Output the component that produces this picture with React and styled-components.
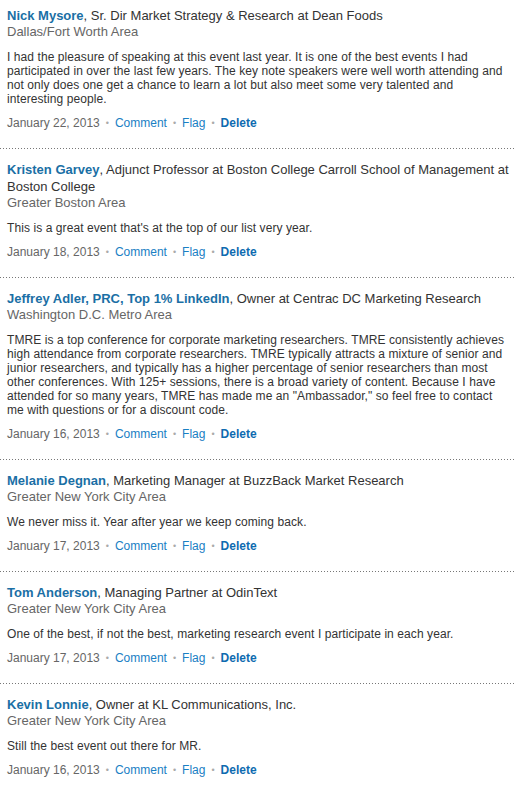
import React from 'react'
import styled, { createGlobalStyle } from 'styled-components'

const GlobalStyle = createGlobalStyle`
  body {
    margin: 0;
    background: #fff;
    font-family: Arial, "Liberation Sans", sans-serif;
  }
`

const reviews = [
  {
    name: 'Nick Mysore',
    title: 'Sr. Dir Market Strategy & Research at Dean Foods',
    location: 'Dallas/Fort Worth Area',
    text: 'I had the pleasure of speaking at this event last year. It is one of the best events I had participated in over the last few years. The key note speakers were well worth attending and not only does one get a chance to learn a lot but also meet some very talented and interesting people.',
    date: 'January 22, 2013',
  },
  {
    name: 'Kristen Garvey',
    title: 'Adjunct Professor at Boston College Carroll School of Management at Boston College',
    location: 'Greater Boston Area',
    text: "This is a great event that's at the top of our list very year.",
    date: 'January 18, 2013',
  },
  {
    name: 'Jeffrey Adler, PRC, Top 1% LinkedIn',
    title: 'Owner at Centrac DC Marketing Research',
    location: 'Washington D.C. Metro Area',
    text: 'TMRE is a top conference for corporate marketing researchers. TMRE consistently achieves high attendance from corporate researchers. TMRE typically attracts a mixture of senior and junior researchers, and typically has a higher percentage of senior researchers than most other conferences. With 125+ sessions, there is a broad variety of content. Because I have attended for so many years, TMRE has made me an "Ambassador," so feel free to contact me with questions or for a discount code.',
    date: 'January 16, 2013',
  },
  {
    name: 'Melanie Degnan',
    title: 'Marketing Manager at BuzzBack Market Research',
    location: 'Greater New York City Area',
    text: 'We never miss it. Year after year we keep coming back.',
    date: 'January 17, 2013',
  },
  {
    name: 'Tom Anderson',
    title: 'Managing Partner at OdinText',
    location: 'Greater New York City Area',
    text: 'One of the best, if not the best, marketing research event I participate in each year.',
    date: 'January 17, 2013',
  },
  {
    name: 'Kevin Lonnie',
    title: 'Owner at KL Communications, Inc.',
    location: 'Greater New York City Area',
    text: 'Still the best event out there for MR.',
    date: 'January 16, 2013',
  },
]

function App() {
  return (
    <>
      <GlobalStyle />
      <List>
        {reviews.map((r, i) => (
          <Review key={i} last={i === reviews.length - 1}>
            <Header>
              <Name href="#">{r.name}</Name>, {r.title}
            </Header>
            <Location>{r.location}</Location>
            <Body>{r.text}</Body>
            <Meta>
              {r.date}
              <Dot>•</Dot>
              <Action href="#">Comment</Action>
              <Dot>•</Dot>
              <Action href="#">Flag</Action>
              <Dot>•</Dot>
              <Action href="#" strong>Delete</Action>
            </Meta>
          </Review>
        ))}
      </List>
    </>
  )
}

export default App

const List = styled.div`
  width: 516px;
  padding-top: 7px;
`

const Review = styled.div`
  padding: 0 3px 0 7px;
  padding-bottom: ${p => (p.last ? '0' : '20px')};
  margin-bottom: 11px;
  background-image: ${p =>
    p.last ? 'none' : 'linear-gradient(to right, #777 1px, transparent 1px)'};
  background-size: 3px 1px;
  background-repeat: repeat-x;
  background-position: 0 calc(100% - 1px);
`

const Header = styled.div`
  font-size: 13px;
  line-height: 17px;
  color: #333;
`

const Name = styled.a`
  color: #1a6fa5;
  font-weight: bold;
  text-decoration: none;
`

const Location = styled.div`
  font-size: 13px;
  line-height: 16px;
  color: #666;
`

const Body = styled.p`
  margin: 10px 0 0;
  padding-right: 2px;
  font-size: 12px;
  line-height: 14px;
  letter-spacing: 0.08px;
  color: #333;
`

const Meta = styled.div`
  margin-top: 10px;
  font-size: 12px;
  line-height: 14px;
  color: #666;
`

const Dot = styled.span`
  color: #aaa;
  font-size: 9px;
  margin: 0 6px;
  vertical-align: 1px;
`

const Action = styled.a`
  color: ${p => (p.strong ? '#0e6bb0' : '#1a80c4')};
  font-weight: ${p => (p.strong ? 'bold' : 'normal')};
  text-decoration: none;
`
